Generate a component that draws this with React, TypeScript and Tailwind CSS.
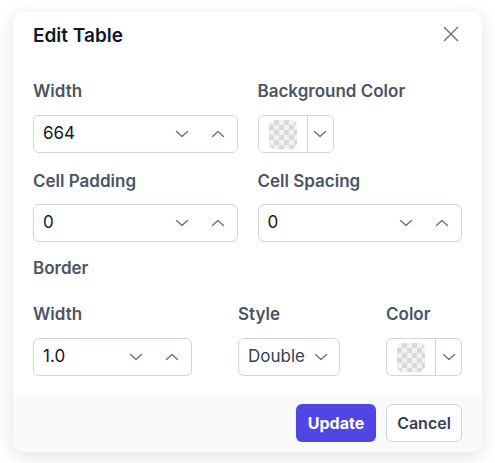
import { X } from "lucide-react";

function Chevron({ up = false }: { up?: boolean }) {
  return (
    <svg width="14" height="8" viewBox="0 0 14 8" fill="none" className="text-gray-500">
      <path
        d={up ? "M1.5 6.5L7 1.5L12.5 6.5" : "M1.5 1.5L7 6.5L12.5 1.5"}
        stroke="currentColor"
        strokeWidth="1.4"
        strokeLinecap="round"
        strokeLinejoin="round"
      />
    </svg>
  );
}

function NumberField({ value, className = "" }: { value: string; className?: string }) {
  return (
    <div className={`flex h-[38px] items-center rounded-md border border-gray-300 bg-white pl-[9px] pr-3 ${className}`}>
      <span className="flex-1 text-[17px] text-gray-900">{value}</span>
      <div className="flex items-center gap-[22px]">
        <Chevron />
        <Chevron up />
      </div>
    </div>
  );
}

function ColorField() {
  return (
    <div className="flex h-[38px] w-[76px] items-stretch rounded-md border border-gray-300 bg-white">
      <div className="flex w-[49px] items-center justify-center border-r border-gray-300">
        <div className="h-[29px] w-[28px] rounded-md bg-[conic-gradient(#d9d9d9_25%,#f2f2f2_0_50%,#d9d9d9_0_75%,#f2f2f2_0)] bg-[length:10px_10px]" />
      </div>
      <div className="flex flex-1 items-center justify-center">
        <Chevron />
      </div>
    </div>
  );
}

function Label({ children }: { children: string }) {
  return <div className="text-[17px] font-semibold leading-5 text-gray-600">{children}</div>;
}

export default function App() {
  return (
    <div className="min-h-screen bg-white pt-3 pl-[13px]" style={{ fontFamily: "Inter, 'Noto Sans', sans-serif" }}>
      <div className="w-[469px] overflow-hidden rounded-[10px] bg-white shadow-[0_4px_18px_rgba(0,0,0,0.12)]">
        <div className="px-5 pt-[10px] pb-[19px]">
          <div className="flex items-start justify-between">
            <h2 className="text-[19px] font-semibold leading-7 text-gray-900">Edit Table</h2>
            <button className="-mt-[1px] -mr-[2px] text-gray-500">
              <X size={26} strokeWidth={1.3} />
            </button>
          </div>

          <div className="mt-[31px] grid grid-cols-2 gap-x-5">
            <div>
              <Label>Width</Label>
              <NumberField value="664" className="mt-[14px]" />
            </div>
            <div>
              <Label>Background Color</Label>
              <div className="mt-[14px]">
                <ColorField />
              </div>
            </div>
            <div className="mt-[18px]">
              <Label>Cell Padding</Label>
              <NumberField value="0" className="mt-[13px]" />
            </div>
            <div className="mt-[18px]">
              <Label>Cell Spacing</Label>
              <NumberField value="0" className="mt-[13px]" />
            </div>
          </div>

          <div className="mt-4">
            <Label>Border</Label>
          </div>

          <div className="mt-[26px] flex justify-between">
            <div className="w-[159px]">
              <Label>Width</Label>
              <NumberField value="1.0" className="mt-[14px]" />
            </div>
            <div>
              <Label>Style</Label>
              <div className="mt-[14px] flex h-[38px] w-[102px] items-center justify-between rounded-md border border-gray-300 bg-white pl-[9px] pr-[11px]">
                <span className="text-[17px] text-gray-700">Double</span>
                <Chevron />
              </div>
            </div>
            <div>
              <Label>Color</Label>
              <div className="mt-[14px]">
                <ColorField />
              </div>
            </div>
          </div>
        </div>

        <div className="flex justify-end gap-[10px] bg-gray-50 px-5 pt-[9px] pb-[10px]">
          <button className="h-[38px] w-[80px] rounded-md bg-[#4f46e5] text-base font-bold text-white">Update</button>
          <button className="h-[38px] w-[76px] rounded-md border border-gray-300 bg-white text-base font-semibold text-gray-700">
            Cancel
          </button>
        </div>
      </div>
    </div>
  );
}
